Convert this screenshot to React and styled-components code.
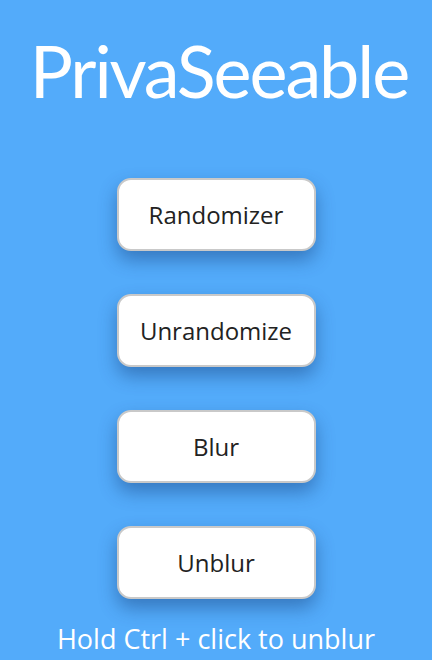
import React from 'react';
import styled, { createGlobalStyle } from 'styled-components';

const GlobalStyle = createGlobalStyle`
  html, body {
    margin: 0;
    padding: 0;
    background: #53abfa;
    height: 100%;
    overflow: hidden;
  }
`;

const Page = styled.div`
  width: 432px;
  height: 660px;
  background: #53abfa;
  display: flex;
  flex-direction: column;
  align-items: center;
  font-family: 'Open Sans', 'DejaVu Sans', sans-serif;
`;

const Title = styled.h1`
  margin: 34px 0 0;
  font-family: Lato, 'Open Sans', sans-serif;
  font-size: 72px;
  line-height: 72px;
  font-weight: 400;
  color: #ffffff;
  letter-spacing: -2.1px;
  transform: translateX(3px);
`;

const ButtonList = styled.div`
  margin-top: 72px;
  display: flex;
  flex-direction: column;
  gap: 43px;
`;

const ActionButton = styled.button`
  width: 199px;
  height: 73px;
  box-sizing: border-box;
  background: #ffffff;
  border: 2px solid #c9c9c9;
  border-radius: 14px;
  box-shadow: 0 9px 18px rgba(20, 60, 120, 0.45);
  font-family: 'Open Sans', 'DejaVu Sans', sans-serif;
  font-size: 24px;
  font-weight: 500;
  color: #222222;
  cursor: pointer;
`;

const Hint = styled.p`
  margin: 25px 0 0;
  font-size: 27px;
  line-height: 30px;
  font-weight: 500;
  color: #ffffff;
`;

const actions = ['Randomizer', 'Unrandomize', 'Blur', 'Unblur'];

const App = () => (
  <Page>
    <GlobalStyle />
    <Title>PrivaSeeable</Title>
    <ButtonList>
      {actions.map(label => (
        <ActionButton key={label}>{label}</ActionButton>
      ))}
    </ButtonList>
    <Hint>Hold Ctrl + click to unblur</Hint>
  </Page>
);

export default App;
